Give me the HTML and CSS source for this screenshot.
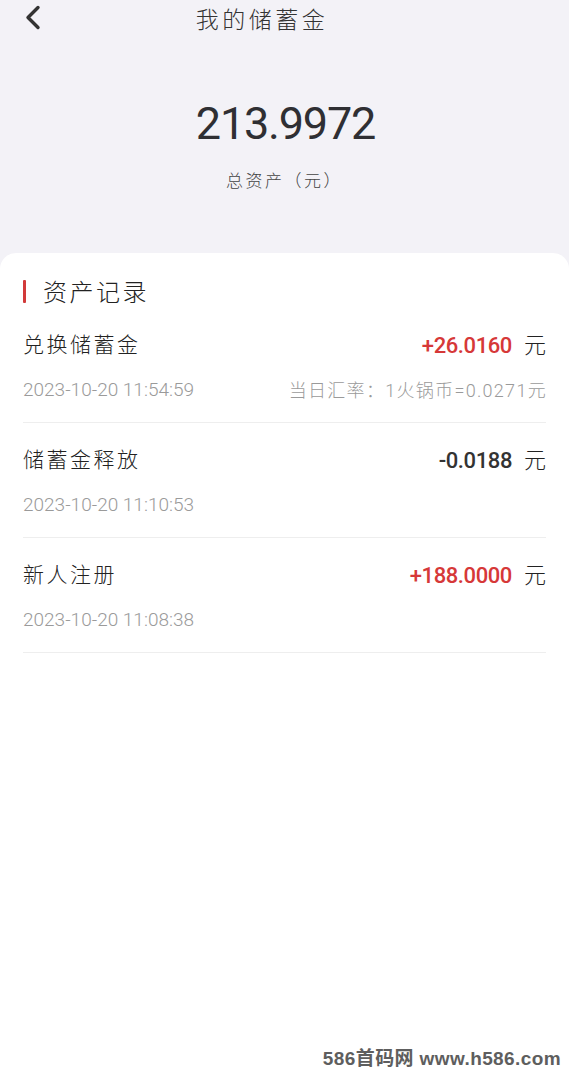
FILE: index.html
```html
<!DOCTYPE html>
<html lang="zh-CN">
<head>
<meta charset="utf-8">
<title>我的储蓄金</title>
<link rel="stylesheet" href="styles.css">
</head>
<body>
<div class="page">
  <header class="topbar">
    <div class="back">
      <svg width="16" height="25" viewBox="0 0 16 25" aria-hidden="true"><polyline points="13,2.5 3,12.5 13,22.5" fill="none" stroke="#333" stroke-width="3.4" stroke-linecap="round" stroke-linejoin="round"/></svg>
    </div>
    <h1 class="title">我的储蓄金</h1>
    <div></div>
  </header>
  <section class="hero">
    <div class="total">213.9972</div>
    <div class="total-label">总资产（元）</div>
  </section>
  <main class="card">
    <h2 class="section-title">资产记录</h2>
    <div class="row">
      <div class="line">
        <span class="name">兑换储蓄金</span>
        <span class="amount"><span class="num red">+26.0160</span><span class="unit">元</span></span>
      </div>
      <div class="line">
        <span class="date">2023-10-20 11:54:59</span>
        <span class="rate">当日汇率：1火锅币=0.0271元</span>
      </div>
    </div>
    <div class="row">
      <div class="line">
        <span class="name">储蓄金释放</span>
        <span class="amount"><span class="num">-0.0188</span><span class="unit">元</span></span>
      </div>
      <div class="line">
        <span class="date">2023-10-20 11:10:53</span>
      </div>
    </div>
    <div class="row">
      <div class="line">
        <span class="name">新人注册</span>
        <span class="amount"><span class="num red">+188.0000</span><span class="unit">元</span></span>
      </div>
      <div class="line">
        <span class="date">2023-10-20 11:08:38</span>
      </div>
    </div>
  </main>
  <div class="watermark">586首码网 www.h586.com</div>
</div>
</body>
</html>
```
FILE: styles.css
```css
* { box-sizing: border-box; }
html, body { margin: 0; padding: 0; }
body {
  background: #f3f2f7;
  font-family: Roboto, "Noto Sans CJK SC", sans-serif;
  color: #333;
}
.page {
  min-height: 100vh;
  display: flex;
  flex-direction: column;
  position: relative;
}
.topbar {
  height: 36px;
  display: grid;
  grid-template-columns: 1fr auto 1fr;
  align-items: center;
}
.back {
  padding-left: 25px;
  display: flex;
  align-items: center;
  height: 36px;
  padding-bottom: 2px;
}
.title {
  margin: 0;
  font-family: "Noto Sans CJK SC", sans-serif;
  font-weight: 300;
  font-size: 23px;
  line-height: 34px;
  letter-spacing: 3.5px;
  padding-left: 3px;
  padding-right: 48px;
  color: #333;
}
.hero {
  padding: 62px 0 61px;
  text-align: center;
}
.total {
  font-size: 45px;
  line-height: 52px;
  letter-spacing: -1.2px;
  font-weight: 400;
  color: #2f2f33;
  padding-left: 2px;
}
.total-label {
  margin-top: 18px;
  font-family: "Noto Sans CJK SC", sans-serif;
  font-weight: 300;
  font-size: 17px;
  line-height: 24px;
  letter-spacing: 2.5px;
  padding-left: 0;
  color: #444;
}
.card {
  flex: 1;
  background: #fff;
  border-radius: 16px 16px 0 0;
  padding: 23px 23px 0;
}
.section-title {
  margin: 0 0 2px;
  display: flex;
  align-items: center;
  gap: 17px;
  font-family: "Noto Sans CJK SC", sans-serif;
  font-weight: 300;
  font-size: 24px;
  line-height: 30px;
  letter-spacing: 2.5px;
  color: #222;
}
.section-title::before {
  content: "";
  width: 3px;
  height: 23px;
  background: #d23a3a;
  border-radius: 1px;
}
.row {
  padding: 20px 0 21px;
  border-bottom: 1px solid #eeeeee;
  display: flex;
  flex-direction: column;
  gap: 19px;
}
.line {
  display: flex;
  justify-content: space-between;
  align-items: center;
}
.line:first-child { height: 30px; }
.line:last-child { height: 24px; }
.name {
  font-family: "Noto Sans CJK SC", sans-serif;
  font-weight: 300;
  font-size: 21px;
  letter-spacing: 2.5px;
  color: #222;
}
.amount {
  font-size: 22px;
  color: #333;
  display: flex;
  align-items: baseline;
  gap: 12px;
}
.num { font-weight: 500; letter-spacing: -0.4px; }
.red { color: #d63838; }
.unit {
  font-family: "Noto Sans CJK SC", sans-serif;
  font-weight: 300;
  font-size: 22px;
  color: #222;
}
.date {
  font-size: 19px;
  font-weight: 300;
  color: #9a9a9a;
}
.rate {
  font-size: 18px;
  font-weight: 300;
  letter-spacing: 1.3px;
  margin-right: -1px;
  color: #9a9a9a;
}
.watermark {
  position: absolute;
  right: 8px;
  bottom: 10px;
  font-family: "Liberation Sans", "Noto Sans CJK SC", sans-serif;
  font-weight: 700;
  font-size: 19px;
  letter-spacing: 0.4px;
  color: #5e5e5e;
}
```
